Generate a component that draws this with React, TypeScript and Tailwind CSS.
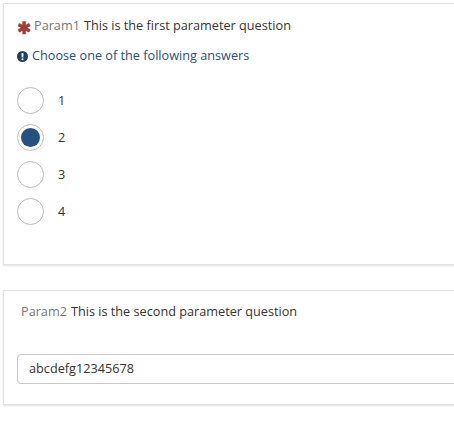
import React from "react";

function Radio({ label, checked }: { label: string; checked?: boolean }) {
  return (
    <div className="flex items-center h-[37px]">
      <div className="w-[27px] h-[27px] rounded-full border border-[#bdbdbd] bg-white flex items-center justify-center shrink-0">
        {checked && <div className="w-[19px] h-[19px] rounded-full bg-[#25507f]" />}
      </div>
      <span className="ml-[14px] text-[12.7px] text-[#333]">{label}</span>
    </div>
  );
}

export default function App() {
  return (
    <div
      className="w-[454px] h-[428px] overflow-hidden bg-white"
      style={{ fontFamily: '"Open Sans", "Liberation Sans", sans-serif' }}
    >
      <div className="ml-[3px] mt-[3px] w-[480px] h-[262px] border border-[#e3e3e3] shadow-[0_1px_2px_rgba(0,0,0,0.12)] bg-white pl-[13px] pt-[12px]">
        <div className="flex items-center text-[12.7px] h-[20px]">
          <span className="text-[#a33c3c] text-[17px] font-bold leading-none mr-[3px] mt-[3px]">✱</span>
          <span className="text-[#777]">Param1</span>
          <span className="text-[#333] ml-[4px]">This is the first parameter question</span>
        </div>
        <div className="flex items-center text-[12.7px] h-[20px] mt-[10px] text-[#2b4f78]">
          <svg width="11" height="11" viewBox="0 0 16 16" className="mr-[4px]">
            <circle cx="8" cy="8" r="8" fill="#1f3f66" />
            <rect x="6.6" y="3" width="2.8" height="6.5" rx="1" fill="white" />
            <circle cx="8" cy="12" r="1.5" fill="white" />
          </svg>
          <span>Choose one of the following answers</span>
        </div>
        <div className="mt-[16px] flex flex-col">
          <Radio label="1" />
          <Radio label="2" checked />
          <Radio label="3" />
          <Radio label="4" />
        </div>
      </div>
      <div className="ml-[3px] mt-[25px] w-[480px] h-[115px] border border-[#e3e3e3] shadow-[0_1px_2px_rgba(0,0,0,0.12)] bg-white pl-[13px] pt-[11px]">
        <div className="flex items-center text-[12.7px] h-[20px] ml-[4px]">
          <span className="text-[#777]">Param2</span>
          <span className="text-[#333] ml-[4px]">This is the second parameter question</span>
        </div>
        <div className="mt-[32px] h-[30px] w-[470px] border border-[#c8c8c8] rounded-[4px] flex items-center pl-[11px] text-[12.7px] text-[#333]">
          abcdefg12345678
        </div>
      </div>
    </div>
  );
}
